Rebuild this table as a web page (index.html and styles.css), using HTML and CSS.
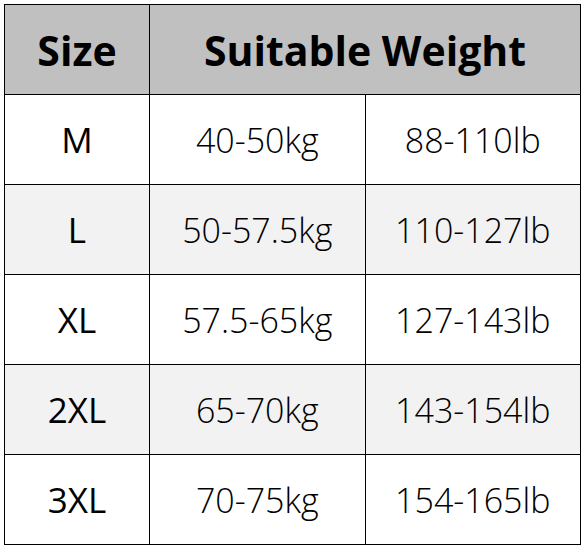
FILE: index.html
```html
<!DOCTYPE html>
<html>
<head>
<meta charset="utf-8">
<link rel="stylesheet" href="styles.css">
</head>
<body>
<table class="size-table">
  <tr class="head">
    <th class="c1">Size</th>
    <th colspan="2">Suitable Weight</th>
  </tr>
  <tr><td class="c1">M</td><td class="c2">40-50kg</td><td>88-110lb</td></tr>
  <tr class="alt"><td class="c1">L</td><td class="c2">50-57.5kg</td><td>110-127lb</td></tr>
  <tr><td class="c1">XL</td><td class="c2">57.5-65kg</td><td>127-143lb</td></tr>
  <tr class="alt"><td class="c1">2XL</td><td class="c2">65-70kg</td><td>143-154lb</td></tr>
  <tr><td class="c1">3XL</td><td class="c2">70-75kg</td><td>154-165lb</td></tr>
</table>
</body>
</html>
```
FILE: styles.css
```css
html, body {
  margin: 0;
  padding: 0;
  background: #ffffff;
}
body {
  padding: 4px 0 0 4px;
  font-family: "Open Sans", "Noto Sans", sans-serif;
  color: #000;
}
.size-table {
  border-collapse: collapse;
  table-layout: fixed;
  width: 577px;
}
.size-table th,
.size-table td {
  border: 1px solid #000;
  height: 89px;
  padding: 0;
  text-align: center;
  vertical-align: middle;
}
.size-table .c1 { width: 144px; }
.size-table .c2 { width: 215px; }
.head th {
  background: #c0c0c0;
  font-weight: 700;
  font-size: 41px;
}
.size-table td {
  font-size: 34px;
  font-weight: 300;
}
.size-table td.c1 {
  font-weight: 400;
  font-size: 35px;
}
.alt td {
  background: #f2f2f2;
}
```
